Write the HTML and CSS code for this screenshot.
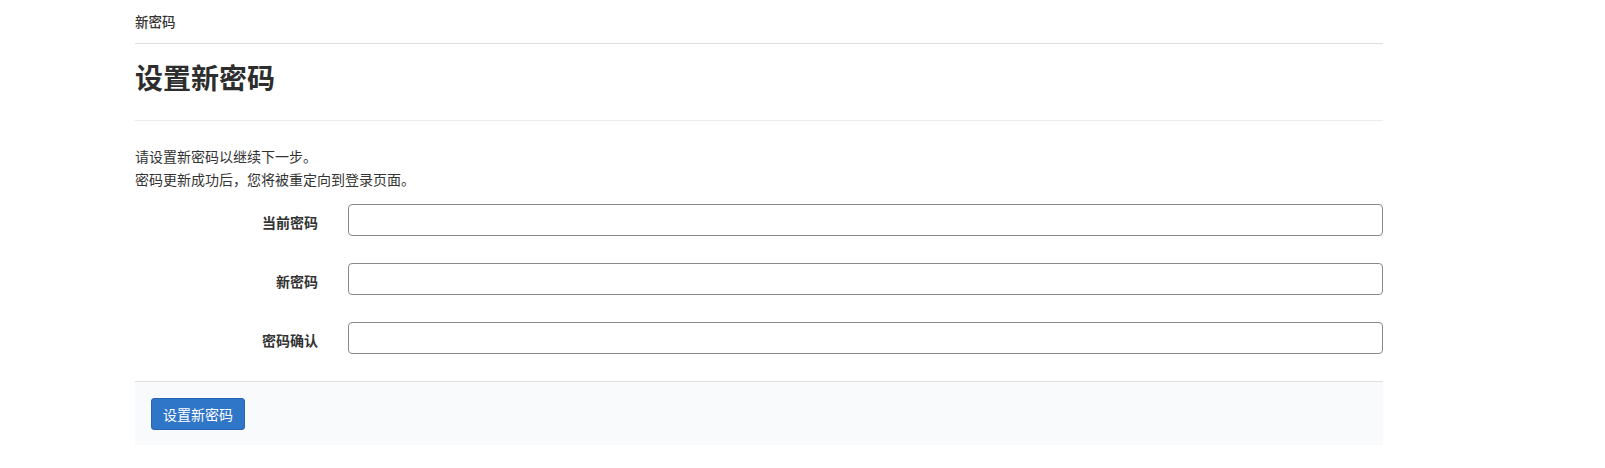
FILE: index.html
```html
<!DOCTYPE html>
<html lang="zh-CN">
<head>
<meta charset="utf-8">
<title>设置新密码</title>
<link rel="stylesheet" href="styles.css">
</head>
<body>
<div class="page">
  <div class="breadcrumb">新密码</div>
  <div class="page-header">
    <h1>设置新密码</h1>
  </div>
  <div class="intro">
    <p>请设置新密码以继续下一步。</p>
    <p>密码更新成功后，您将被重定向到登录页面。</p>
  </div>
  <form class="form">
    <div class="form-row">
      <label class="form-label" for="cur">当前密码</label>
      <input class="form-input" id="cur" type="password">
    </div>
    <div class="form-row">
      <label class="form-label" for="new">新密码</label>
      <input class="form-input" id="new" type="password">
    </div>
    <div class="form-row">
      <label class="form-label" for="conf">密码确认</label>
      <input class="form-input" id="conf" type="password">
    </div>
    <div class="form-actions">
      <button type="button" class="btn">设置新密码</button>
    </div>
  </form>
</div>
</body>
</html>
```

FILE: styles.css
```css
* { box-sizing: border-box; }
html, body {
  margin: 0;
  padding: 0;
  background: #ffffff;
}
body {
  font-family: "Noto Sans CJK SC", "Noto Sans", "Liberation Sans", sans-serif;
  font-size: 14px;
  color: #333333;
}
.page {
  width: 1248px;
  margin-left: 135px;
}
.breadcrumb {
  padding: 11px 0 12px;
  line-height: 20px;
  font-size: 13.5px;
  font-weight: 500;
  color: #333;
  border-bottom: 1px solid #dddddd;
}
.page-header {
  padding: 15px 0 25px;
  border-bottom: 1px solid #ebebeb;
}
.page-header h1 {
  margin: 0;
  font-size: 28px;
  line-height: 36px;
  font-weight: 700;
  color: #2d2d2d;
}
.intro {
  padding-top: 24px;
}
.intro p {
  margin: 0;
  line-height: 23px;
  font-size: 14px;
  color: #333;
}
.form {
  margin: 13px 0 0;
  display: flex;
  flex-direction: column;
  gap: 27px;
}
.form-row {
  display: grid;
  grid-template-columns: 183px 1fr;
  column-gap: 30px;
  align-items: center;
}
.form-label {
  text-align: right;
  font-weight: 700;
  font-size: 14px;
  line-height: 20px;
  color: #333;
  padding-top: 3px;
}
.form-input {
  height: 32px;
  width: 100%;
  border: 1px solid #8a8a8a;
  border-radius: 4px;
  background: #fff;
  padding: 4px 8px;
  font: inherit;
}
.form-actions {
  margin-top: 0;
  border-top: 1px solid #dfdfe2;
  background: #f9fafc;
  padding: 16px 16px 15px;
}
.btn {
  height: 32px;
  padding: 0 11px;
  border: 1px solid #2766b3;
  border-radius: 3px;
  background: #2f75c8;
  color: #ffffff;
  font-family: inherit;
  font-size: 14px;
  line-height: 30px;
  cursor: pointer;
}
```
